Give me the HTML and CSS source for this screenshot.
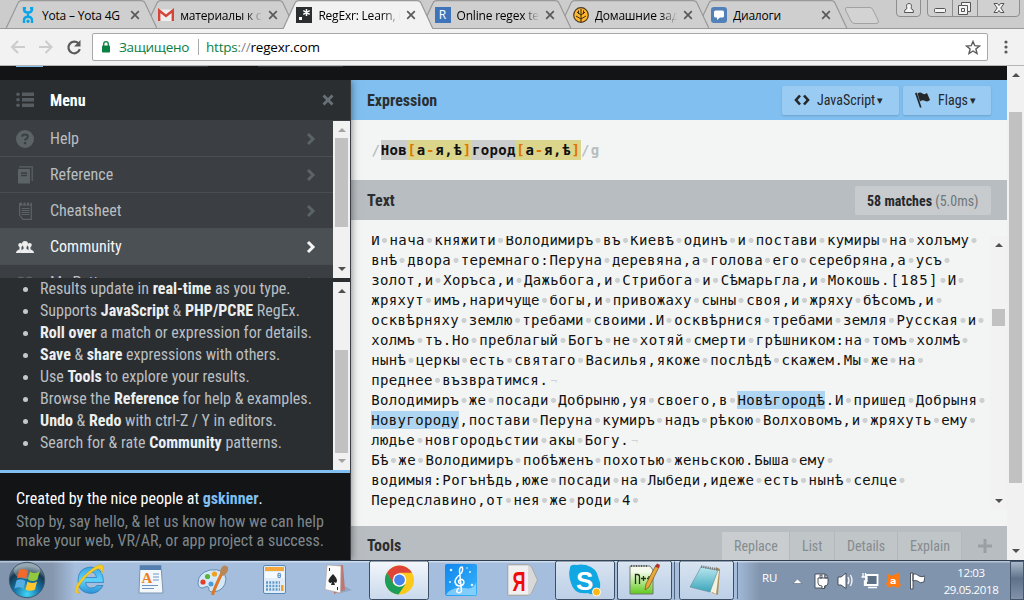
FILE: index.html
```html
<!DOCTYPE html>
<html lang="ru">
<head>
<meta charset="utf-8">
<title>RegExr: Learn, Build, &amp; Test RegEx</title>
<link rel="stylesheet" href="styles.css">
</head>
<body>
<svg width="0" height="0" class="defs">
  <defs>
    <symbol id="x" viewBox="0 0 10 10"><path d="M1.2 1.2l7.6 7.6M8.8 1.2L1.2 8.8" stroke="#5a5a5a" stroke-width="1.7"/></symbol>
    <symbol id="chev" viewBox="0 0 10 14"><path d="M2 2l5 5-5 5" fill="none" stroke="currentColor" stroke-width="3"/></symbol>
    <linearGradient id="red" x2="0" y2="1"><stop stop-color="#f3f7fb"/><stop offset="1" stop-color="#c9d9ec"/></linearGradient>
    <radialGradient id="orb" cx=".5" cy=".9" r=".8"><stop stop-color="#43d5f5"/><stop offset=".45" stop-color="#1475aa"/><stop offset=".8" stop-color="#16384f"/><stop offset="1" stop-color="#6d8593"/></radialGradient>
    <linearGradient id="ie" x2="0" y2="1"><stop stop-color="#3ca7e6"/><stop offset=".5" stop-color="#5ed2fb"/><stop offset="1" stop-color="#2d8fd5"/></linearGradient>
    <linearGradient id="note" x2="0" y2="1"><stop stop-color="#b9e6ee"/><stop offset="1" stop-color="#3ba6bb"/></linearGradient>
    <linearGradient id="npp" x2="0" y2="1"><stop offset=".2" stop-color="#f4fbea"/><stop offset="1" stop-color="#5fca1b"/></linearGradient>
    <linearGradient id="mus" x2="1" y2="1"><stop stop-color="#0f86ef"/><stop offset="1" stop-color="#39b4f9"/></linearGradient>
  </defs>
</svg>

<header class="tabs">
  <svg class="tab-shapes" width="1024" height="29">
    <g fill="#cfcfcf" stroke="#999" stroke-width="1.2">
      <path d="M697 28.5L709 3Q710 .6 713 .6H831Q834 .6 835 3L847 28.5"/>
      <path d="M559 28.5L571 3Q572 .6 575 .6H693Q696 .6 697 3L709 28.5"/>
      <path d="M421 28.5L433 3Q434 .6 437 .6H555Q558 .6 559 3L571 28.5"/>
      <path d="M145 28.5L157 3Q158 .6 161 .6H279Q282 .6 283 3L295 28.5"/>
      <path d="M6 28.5L18 3Q19 .6 22 .6H141Q144 .6 145 3L157 28.5"/>
    </g>
    <path d="M0 28.5H1024" stroke="#999"/>
    <path d="M283 29L295 3Q296 .6 299 .6H417Q420 .6 421 3L433 29" fill="#f2f2f2" stroke="#999" stroke-width="1.2"/>
    <path d="M847 7.5H870Q872 7.5 873 10L878.500 21Q879 23.500 876 23.500H855Q852 23.500 851 21L845.500 10Q844.500 7.500 847 7.500Z" fill="#d3d3d3" stroke="#a2a2a2"/>
    <g fill="#d0d0d0" stroke="#8e8e8e"><path d="M896.500-2V13Q896.500 16.500 900 16.500H917Q920.500 16.500 920.500 13V-2Z"/><path d="M927.500-2V13Q927.500 16.500 931 16.500H1016Q1019.500 16.500 1019.500 13V-2Z"/><path d="M952.500 0V16M977.500 0V16"/></g>
    <g fill="#f4f4f4" stroke="#555"><path d="M904.500 12.500Q904 9.500 907 8.500Q905.500 3.500 909 3.500Q912.500 3.500 911 8.500Q914 9.500 913.500 12.500Z"/><rect x="934.500" y="8.500" width="11" height="4" rx="1"/><path d="M961.500 2.500H970.500V11.500H967.500V14.500H958.500V5.500H961.500Z"/><path d="M961.500 5.500H967.500V11.500M961.500 8.500H964.500V11.500H961.500Z"/></g>
    <path d="M994 3.500H997.500L999 5.500L1000.500 3.500H1004L1000.800 8L1004 12.500H1000.500L999 10.500L997.500 12.500H994L997.200 8Z" fill="#f4f4f4" stroke="#555"/>
  </svg>
  <div class="tab-row">
    <div class="tab"><svg width="16" height="16" viewBox="0 0 16 16" fill="none" stroke="#0aa5e8" stroke-width="2.4"><path d="M4 0V2.500Q4 5.500 8 5.500Q12 5.500 12 2.500V0M8 5.500V9.500M4 16V13.500Q4 9.800 8 9.800Q12 9.800 12 13.500V16M3 1.200H6M10 1.200H13"/><circle cx="8" cy="14.300" r=".9" fill="#0aa5e8" stroke-width="1.600"/></svg><span>Yota – Yota 4G</span><svg class="close"><use href="#x"/></svg></div>
    <div class="tab"><svg width="16" height="16" viewBox="0 0 16 16"><path d="M1 2.500H15V14H1Z" fill="#eee"/><path d="M1.200 14V3.500L8 9L14.800 3.500V14" fill="none" stroke="#d54437" stroke-width="2.400"/></svg><span>материалы к с</span><svg class="close"><use href="#x"/></svg></div>
    <div class="tab on"><svg width="16" height="16" viewBox="0 0 16 16"><rect width="16" height="16" fill="#2b2e31"/><path d="M3 10H6V13H3Z" fill="#fff"/><path d="M10.500 2V9M7.300 3.700L13.700 7.300M13.700 3.700L7.300 7.300" stroke="#fff" stroke-width="1.500"/></svg><span>RegExr: Learn, B</span><svg class="close"><use href="#x"/></svg></div>
    <div class="tab"><b class="r">R</b><span>Online regex tes</span><svg class="close"><use href="#x"/></svg></div>
    <div class="tab"><svg width="16" height="16" viewBox="0 0 16 16"><circle cx="8" cy="8" r="7.300" fill="#ffb82e" stroke="#4b3820" stroke-width="1.200"/><path d="M8 2V15M8 12L3 9M8 12L13 9M8 8L4 5M8 8L12 5M5.500 7V3.500M10.500 7V3.500" stroke="#3b2a14" fill="none"/></svg><span>Домашние зад</span><svg class="close"><use href="#x"/></svg></div>
    <div class="tab"><svg width="16" height="16" viewBox="0 0 16 16"><rect width="16" height="16" rx="3" fill="#5181b8"/><path d="M4.500 3.500H11.500Q13 3.500 13 5V9Q13 10.500 11.500 10.500H9L6 13V10.500H4.500Q3 10.500 3 9V5Q3 3.500 4.500 3.500Z" fill="#fff"/></svg><span>Диалоги</span><svg class="close"><use href="#x"/></svg></div>
  </div>
</header>

<nav class="toolbar">
  <svg class="nav" width="80" height="20" viewBox="0 0 80 20" fill="none" stroke-width="2"><path d="M16 10H3.500M9 4L3 10L9 16M30 10H42M36.500 4L42.500 10L36.500 16" stroke="#ccc"/><path d="M69.500 6.500A5.800 5.800 0 1 0 70.800 12.200" stroke="#5a5a5a" stroke-width="2.200"/><path d="M71.500 3V9.500H65Z" fill="#5a5a5a"/></svg>
  <div class="url">
    <svg width="8" height="12" viewBox="0 0 8 12"><rect y="4.500" width="8" height="7" rx=".8" fill="#0b8043"/><path d="M1.700 5V3A2.300 2.300 0 0 1 6.300 3V5" fill="none" stroke="#0b8043" stroke-width="1.300"/></svg>
    <span class="safe">Защищено</span><i></i><span class="addr"><em>https</em><u>://</u>regexr.com</span>
    <svg class="star" width="16" height="15" viewBox="0 0 16 15"><path d="M8 1.500L9.800 5.700L14.500 6L10.900 9L12 13.500L8 11L4 13.500L5.100 9L1.500 6L6.200 5.700Z" fill="none" stroke="#5a5a5a" stroke-width="1.400"/></svg>
  </div>
  <svg class="dots" width="4" height="14" viewBox="0 0 4 14" fill="#5a5a5a"><circle cx="2" cy="2" r="1.600"/><circle cx="2" cy="7" r="1.600"/><circle cx="2" cy="12" r="1.600"/></svg>
</nav>

<div class="page">
  <div class="app">
    <div class="brand"><i class="b1"></i><i class="b2"></i><i class="b3"></i></div>
    <div class="columns">
      <aside>
        <div class="menu-head"><svg width="18" height="16" viewBox="0 0 18 16" fill="#565d62"><path d="M6 .5H18V4H6ZM6 6H18V9.500H6ZM6 11.500H18V15H6Z"/><circle cx="2" cy="2.200" r="1.800"/><circle cx="2" cy="7.700" r="1.800"/><circle cx="2" cy="13.200" r="1.800"/></svg><b class="rc">Menu</b><svg class="mx" width="12" height="12" viewBox="0 0 12 12"><path d="M1.500 1.500L10.500 10.500M10.500 1.500L1.500 10.500" stroke="#697176" stroke-width="2.800"/></svg></div>
        <div class="menu">
          <div class="items">
            <div class="item"><svg width="18" height="18" viewBox="0 0 18 18"><circle cx="9" cy="9" r="9" fill="#5b6367"/><path d="M6.200 6.700Q6.300 4.500 9 4.500Q11.800 4.500 11.800 6.700Q11.800 8 10.200 8.800Q9 9.400 9 10.600" fill="none" stroke="#3b3e42" stroke-width="2"/><rect x="7.900" y="12" width="2.200" height="2.200" fill="#3b3e42"/></svg><span class="rc">Help</span><svg class="chev"><use href="#chev"/></svg></div>
            <div class="item"><svg width="18" height="18" viewBox="0 0 18 18"><path d="M2 3H14V17.500H2Z" fill="#5b6367"/><path d="M3 .8H16.200V15" fill="none" stroke="#5b6367" stroke-width="1.200"/><path d="M5 7H11M5 9.500H11" stroke="#3b3e42" stroke-width="1.300"/></svg><span class="rc">Reference</span><svg class="chev"><use href="#chev"/></svg></div>
            <div class="item"><svg width="18" height="18" viewBox="0 0 18 18"><path d="M3.600 1V13L7 17.300H15.300V1" fill="none" stroke="#5b6367" stroke-width="1.200"/><path d="M3 3H16M5.500 6.500H13.500M5.500 8.500H13.500M5.500 10.500H13.500M5.500 12.500H13.500" stroke="#5b6367" stroke-width="1.100"/><path d="M4 2H15" stroke="#5b6367" stroke-width="3" stroke-dasharray="2 1.500"/></svg><span class="rc">Cheatsheet</span><svg class="chev"><use href="#chev"/></svg></div>
            <div class="item on"><svg width="18" height="18" viewBox="0 0 18 18" fill="#eee"><circle cx="9" cy="6" r="3"/><path d="M4 15Q4 12 7.500 11V8H10.500V11Q14 12 14 15Z"/><circle cx="4.300" cy="7" r="2.100"/><circle cx="13.700" cy="7" r="2.100"/><path d="M0 15Q0 12.500 3.500 11.500V8H5.500V12L4 15ZM18 15Q18 12.500 14.500 11.500V8H12.500V12L14 15Z"/></svg><span class="rc">Community</span><svg class="chev"><use href="#chev"/></svg></div>
            <div class="item"><svg width="18" height="18" viewBox="0 0 18 18"><path d="M9 16L1 8Q0 3 4.500 2.500Q8 2.500 9 5Q10 2.500 13.500 2.500Q18 3 17 8Z" fill="#5b6367"/></svg><span class="rc">My Patterns</span><svg class="chev"><use href="#chev"/></svg></div>
          </div>
          <div class="bar menu-bar"><s class="up dim"></s><p></p><s class="down"></s></div>
        </div>
        <div class="info">
          <ul>
            <li><span class="rc">Results update in <b>real-time</b> as you type.</span></li>
            <li><span class="rc">Supports <b>JavaScript</b> &amp; <b>PHP/PCRE</b> RegEx.</span></li>
            <li><span class="rc"><b>Roll over</b> a match or expression for details.</span></li>
            <li><span class="rc"><b>Save</b> &amp; <b>share</b> expressions with others.</span></li>
            <li><span class="rc">Use <b>Tools</b> to explore your results.</span></li>
            <li><span class="rc">Browse the <b>Reference</b> for help &amp; examples.</span></li>
            <li><span class="rc"><b>Undo</b> &amp; <b>Redo</b> with ctrl-Z / Y in editors.</span></li>
            <li><span class="rc">Search for &amp; rate <b>Community</b> patterns.</span></li>
          </ul>
          <div class="bar info-bar"><s class="up"></s><p></p><s class="down dim"></s></div>
        </div>
        <footer>
          <div class="made"><span class="rc">Created by the nice people at <b>gskinner</b>.</span></div>
          <div><span class="rc">Stop by, say hello, &amp; let us know how we can help</span></div>
          <div><span class="rc">make your web, VR/AR, or app project a success.</span></div>
        </footer>
      </aside>
      <main>
        <div class="head blue"><b class="rc">Expression</b>
          <div class="btn js"><svg width="16" height="12" viewBox="0 0 16 12" fill="none" stroke="#25282b" stroke-width="2.600"><path d="M6 1.500L2 6L6 10.500M10 1.500L14 6L10 10.500"/></svg><span class="rc">JavaScript</span><small>▾</small></div>
          <div class="btn fl"><svg width="16" height="16" viewBox="0 0 16 16" fill="#25282b"><path d="M0 1.200L1.700.5L6.500 15.200L5 15.700ZM2.500 1.500Q5-.5 7.500 1.500Q9.500 3 12 1L15 8Q12.500 10.500 9.800 8.800Q7.500 7.500 5 9.500Z"/></svg><span class="rc">Flags</span><small>▾</small></div>
        </div>
        <div class="expr mono"><span class="sl">/</span><span class="lit">Нов</span><span class="set">[а-я,ѣ]</span><span class="lit">город</span><span class="set">[а-я,ѣ]</span><span class="sl">/g</span></div>
        <div class="head grey"><b class="rc">Text</b><div class="result"><span class="rc"><b>58 matches</b> (5.0ms)</span></div></div>
        <div class="editor">
          <div class="text mono">
            <div>И нача княжити Володимиръ въ Киевѣ одинъ и постави кумиры на холъму </div>
            <div>внѣ двора теремнаго:Перуна деревяна,а голова его серебряна,а усъ </div>
            <div>золот,и Хоръса,и Дажьбога,и Стрибога и Сѣмарьгла,и Мокошь.[185] И </div>
            <div>жряхут имъ,наричуще богы,и привожаху сыны своя,и жряху бѣсомъ,и </div>
            <div>осквѣрняху землю требами своими.И осквѣрнися требами земля Русская и </div>
            <div>холмъ тъ.Но преблагый Богъ не хотяй смерти грѣшником:на томъ холмѣ </div>
            <div>нынѣ церкы есть святаго Василья,якоже послѣдѣ скажем.Мы же на </div>
            <div>преднее възвратимся.<q>¬</q></div>
            <div>Володимиръ же посади Добрыню,уя своего,в <mark>Новѣгородѣ</mark>.И пришед Добрыня </div>
            <div><mark>Новугороду</mark>,постави Перуна кумиръ надъ рѣкою Волховомъ,и жряхуть ему </div>
            <div>людье новгородьстии акы Богу.<q>¬</q></div>
            <div>Бѣ же Володимиръ побѣженъ похотью женьскою.Быша ему </div>
            <div>водимыя:Рогънѣдь,юже посади на Лыбеди,идеже есть нынѣ селце </div>
            <div>Передславино,от нея же роди 4 </div>
          </div>
          <div class="bar text-bar"><s class="up"></s><p></p><s class="down"></s></div>
        </div>
        <div class="head grey tools"><b class="rc">Tools</b>
          <div class="tl" style="width:68px"><span class="rc">Replace</span></div><div class="tl" style="width:45px"><span class="rc">List</span></div><div class="tl" style="width:63px"><span class="rc">Details</span></div><div class="tl" style="width:64px"><span class="rc">Explain</span></div>
          <svg width="14" height="14" viewBox="0 0 14 14"><path d="M7 0V14M0 7H14" stroke="#9a9fa2" stroke-width="3"/></svg>
        </div>
      </main>
    </div>
  </div>
  <div class="bar page-bar"><s class="up"></s><p></p><s class="down"></s></div>
</div>

<footer class="taskbar">
  <svg class="apps" width="740" height="40" viewBox="0 560 740 40">
    <g fill="url(#red)" stroke="#3d4d63"><rect x="369.500" y="561" width="59" height="38.500" rx="2"/><path d="M617.500 561.500V599.500M674.500 561.500V599.500" stroke-width=".8"/><rect x="555.500" y="561" width="59" height="38.500" rx="2" fill-opacity=".65"/><rect x="617.500" y="561" width="54" height="38.500" rx="2" fill-opacity=".65"/><rect x="679.500" y="561" width="54" height="38.500" rx="2" fill-opacity=".65"/><path d="M737.500 562V599" stroke-width=".8"/></g>
    <circle cx="27" cy="580" r="17.700" fill="url(#orb)" stroke="#415b71"/><ellipse cx="27" cy="571" rx="13" ry="8" fill="#fff" opacity=".28"/>
    <path d="M19 570Q24 567.500 28 571L26 579Q22 576.500 17 578.500Z" fill="#f06a2c"/><path d="M30 571.500Q34 574.500 39.500 571.500L37.500 579.500Q33 582.500 28 579.500Z" fill="#92c83e"/><path d="M16.500 580.500Q21 578 25.500 581L23.500 589Q20 586 14.500 588.500Z" fill="#56aee2"/><path d="M27.500 581.500Q32 584.500 37 581.500L35 589.500Q30 592 25.500 589.500Z" fill="#fdc62e"/>
    <path d="M103 585.500Q99 593.500 90.500 593.500Q78 592.500 78 580.500Q78 568 90.500 567Q103.500 567 103.500 582.500H85.500Q86.500 588 91.500 588Q95 588 97 585.500ZM85.500 577.500H96.500Q95.500 572 91 572Q87 572 85.500 577.500Z" fill="url(#ie)" stroke="#2678b8" stroke-width=".7"/><path d="M77 593.500Q71 590 83 577Q97 563 102 565Q105 567 101.500 574Q102.500 567.500 97 569Q88 573 81 583Q75 592 80 592.500Z" fill="#f8cd28" stroke="#dba510" stroke-width=".5"/>
    <path d="M140 565.500H161L163 593H139Z" fill="#f5f8fb" stroke="#7d96b0"/><path d="M140 565.500H161V570H140Z" fill="#527fb0"/><text x="141.500" y="583" font-family="Liberation Serif" font-weight="bold" font-size="15" fill="#ed7d1e">A</text><path d="M153 574H159M153 577H159M153 580H159M142 585.500H158M142 588.500H154" stroke="#6c94c7"/>
    <path d="M198 583Q198 573 210 570Q225 568 226 579Q225 591 213 592Q208 592 209 588Q208 585 203 588Q198 588 198 583Z" fill="#d5e8f7" stroke="#638db4"/><circle cx="203" cy="582" r="2.600" fill="#e23e2b"/><circle cx="207.500" cy="576.500" r="2.600" fill="#58b53b"/><circle cx="214.500" cy="574" r="2.600" fill="#f0a11f"/><circle cx="211" cy="584" r="2.500" fill="#4a9bdc"/><path d="M212.500 595Q214 589 222 573" stroke="#dc7928" stroke-width="3" fill="none"/><path d="M220 574Q220 569 222 567Q224 564 228 567Q229 573 223 576Z" fill="#b98658"/>
    <rect x="263.500" y="565.500" width="22" height="28" rx="1.500" fill="#e1edf8" stroke="#5589bb"/><path d="M265 567H284V571H265Z" fill="#f3a73d"/><path d="M265 572H284V578H265Z" fill="#f5fafe"/><text x="277" y="577.500" font-size="7" font-family="DejaVu Sans Mono" fill="#33527e">0</text><path d="M266 582.500H280M266 586H280M266 589.500H280" stroke="#5f9ac9" stroke-width="2.300" stroke-dasharray="2 1.200"/><path d="M281 585H283.500V591H281Z" fill="#efa331"/>
    <path d="M342 585L352 590L338 594Z" fill="#8197b3" opacity=".6"/><path d="M332 566L343 565L345 590L334 594Z" fill="#bd7671"/><path d="M327 565L341 566L340.500 593L325 589.500Z" fill="#fbfbfb" stroke="#b4a5a4" stroke-width=".7"/><path d="M333 574Q328 579 328.500 581.500Q330 584 332 582L331 585H335L334 582Q337 584 337 580.500Q337 578 333 574Z" fill="#252525"/><path d="M329.500 568V571M337.500 587V590" stroke="#222"/>
    <circle cx="399.500" cy="580" r="14.500" fill="#fbc91c"/><path d="M387 572.700A14.500 14.500 0 0 1 412 572.700H399.500L393 583.500Z" fill="#de4437"/><path d="M387 572.500A14.500 14.500 0 0 0 398.500 594.500L405.500 584Q397 589 393 583Z" fill="#1c9e58"/><circle cx="399.500" cy="580" r="6.800" fill="#fff"/><circle cx="399.500" cy="580" r="5.400" fill="#4684ee"/>
    <rect x="445" y="564" width="32" height="32" rx="2" fill="url(#mus)"/><path d="M448 592Q456 586 465 588T476 582V595H446Z" fill="#b8e4ff" opacity=".6"/><path d="M459 588Q456 590 457 592Q460 594 461.500 591L459.500 571Q459.500 567 462 567Q463.500 569 461.500 573Q455 578 455 582Q456 586.500 461 586Q465 584 463.500 580.500Q460.500 578 458.500 581Q458.500 583 460 584" fill="none" stroke="#fff" stroke-width="1.500"/><g fill="#d9f2ff"><circle cx="451" cy="570" r="1.300"/><circle cx="470" cy="572" r="1"/><circle cx="472" cy="585" r="1.300"/><circle cx="450" cy="582" r="1"/><circle cx="467" cy="568" r=".8"/></g>
    <path d="M509 564.500H527Q530 564.500 531.500 567L537.500 580L531.500 593Q530 595.500 527 595.500H509Q507.500 595.500 507.500 594V566Q507.500 564.500 509 564.500Z" fill="#d9d9d9" stroke="#aaa"/><rect x="509" y="566" width="19" height="28" fill="#f0f0f0"/><text x="512.500" y="590.500" font-size="28" font-family="Liberation Sans" font-weight="bold" fill="#f00b0b" textLength="13" lengthAdjust="spacingAndGlyphs">Я</text>
    <path d="M570 568Q570 564 577 565Q580 564 586 565Q597 568 598.500 578Q603 588 596 594Q590 595 588 593Q574 595 571 583Q568 575 570 568Z" fill="#10a7e2"/><text x="576" y="589.500" font-size="26" font-weight="bold" font-family="Liberation Sans" fill="#fff">S</text><circle cx="596.500" cy="592" r="4" fill="#fdb714" stroke="#fff"/>
    <path d="M630 566H650L653 570V594H630Z" fill="url(#npp)" stroke="#777"/><path d="M631 566H648" stroke="#555" stroke-width="2" stroke-dasharray="1 1.500"/><path d="M635.500 584V574.500H637.500Q639.500 574.500 639.500 577V584M641 578.500H646M643.500 576V581M647 578.500H651M649 576V581" stroke="#263015" fill="none" stroke-width="1.300"/><path d="M645 590L646 584L656 565L659 567L649 587Z" fill="#e7a939" stroke="#7a4c18" stroke-width=".7"/><path d="M655 567L659 568L660 565L657 563.500Z" fill="#b03127"/>
    <path d="M716 567L720 569L718 595L712 593Z" fill="#a99460"/><path d="M714 570L719 571L716 594L710 591Z" fill="#f4f1df"/><path d="M701 567L718 570L710 592L690 587Z" fill="url(#note)" stroke="#5f8a96" stroke-width=".6"/><path d="M701 566.500L718 569.500" stroke="#777" stroke-width="2.500" stroke-dasharray="1.200 1"/>
  </svg>
  <span class="lang">RU</span>
  <svg class="tray" width="135" height="40" viewBox="790 560 135 40">
    <path d="M793 583.500L797.500 579L802 583.500Z" fill="#fff" stroke="#4b5b70" stroke-width=".5"/>
    <g stroke="#3d4651" fill="#fff" stroke-width=".9"><path d="M815 574H825V588H815Z"/><path d="M818 578H828V583Q828 586 824.500 586V588.500H822V586Q818 586 818 583ZM820 575H822V578H820ZM825 575H827V578H825Z"/><path d="M838 577H841L846 573V588.500L841 585H838Z"/><path d="M866 575H877.500V585H866Z" fill="#5b7085" stroke="#fff" stroke-width="1.800"/><path d="M868 587.500H877M863 573V577M865.500 573V577M861.500 577H867V581H864.500V586" fill="none" stroke="#fff" stroke-width="1.300"/><path d="M910.500 573H913V589H910.500ZM913 574Q916 573 919 576Q922 577.500 925 576L924 582Q920 584 917.500 581Q915.500 580 913 581Z"/></g>
    <path d="M848 577Q850 580.500 848 584M850.500 575Q853.500 580.500 850.500 586" stroke="#f4f4f4" fill="none" stroke-width="1.300"/>
    <path d="M888 574L892 576Q897 572 900 574V578L898.500 581L901 585L898 588L893 586L889 588L886 584L888 580Z" fill="#ff7b11"/><text x="890" y="584" font-size="9.500" font-weight="bold" font-family="DejaVu Sans" fill="#fff">a</text>
  </svg>
  <div class="clock"><span>12:03</span><span>29.05.2018</span></div>
  <div class="peek"></div>
</footer>
<script src="editor.js"></script>
</body>
</html>
```
FILE: styles.css
```css
* { box-sizing: border-box; }
body { margin: 0; width: 1024px; height: 600px; overflow: hidden; font: 12px "Open Sans", "Noto Sans", sans-serif; color: #000; }
.defs { position: absolute; }
svg { display: block; flex: none; }

/* narrow face for the whole site UI */
.rc { font-family: "Roboto Condensed", Roboto, sans-serif; white-space: nowrap; }

.tabs { height: 29px; background: #ccc; position: relative; }
.tab-shapes { position: absolute; left: 0; top: 0; }
.tab-row { position: relative; display: flex; padding-left: 20px; height: 29px; }
.tab { width: 138.200px; display: flex; align-items: center; padding-top: 1px; }
.tab span { margin-left: 6px; width: 84px; overflow: hidden; white-space: nowrap; letter-spacing: -.2px; -webkit-mask-image: linear-gradient(90deg, #000 78%, transparent 98%); }
.tab:first-child span, .tab:last-child span { -webkit-mask-image: none; }
.close { width: 10px; height: 10px; margin-left: 4px; }
.r { width: 16px; height: 16px; background: #3f74bb; color: #fff; font-weight: 400; text-align: center; line-height: 16px; }

.toolbar { height: 37px; background: #f2f2f2; border-bottom: 1px solid #b5b5b5; display: flex; align-items: flex-start; }
.nav { margin: 8px 3px 0 9px; }
.url { margin-top: 4px; width: 896px; height: 28px; background: #fff; border: 1px solid #a8a8a8; border-radius: 2px; display: flex; align-items: center; font-size: 13.500px; padding: 0 6px 0 9px; }
.safe { color: #0b8043; margin-left: 9px; width: 70px; letter-spacing: -.3px; }
.url i { width: 1px; height: 16px; background: #aaa; margin: 0 7px 0 9px; }
.addr { flex: 1; letter-spacing: -.2px; }
.addr em { font-style: normal; color: #0b8043; }
.addr u { text-decoration: none; color: #888; }
.dots { margin: 11px 0 0 16px; }

.page { display: flex; height: 494px; }
.app { width: 1007px; }
.brand { height: 14px; background: #121416; display: flex; }
.brand i { height: 1px; }
.b1 { background: #80bff0; width: 27px; margin-left: 16px; }
.b2 { background: #34383b; width: 48px; margin-left: 117px; }
.b3 { background: #34383b; width: 85px; margin-left: 50px; }
.columns { display: flex; height: 480px; overflow: hidden; }

aside { width: 351px; background: #2b2e31; border-right: 1px solid #3b3e42; color: #b9bfc3; font-size: 16px; box-shadow: 0 0 8px rgba(0,0,0,.5); position: relative; z-index: 1; }
.menu-head { height: 41px; border-bottom: 1px solid #3b3e42; display: flex; align-items: center; padding-left: 16px; color: #fff; }
.menu-head .rc { margin-left: 16px; }
.mx { margin: 0 16px 0 auto; }
.menu { height: 157px; display: flex; overflow: hidden; }
.items { flex: 1; overflow: hidden; }
.item { height: 36px; background: #3b3e42; border-bottom: 1px solid #4a4e52; display: flex; align-items: center; padding: 0 17px 0 16px; color: #b9bfc3; }
.item .rc { margin-left: 16px; }
.item .chev { width: 10px; height: 14px; margin-left: auto; color: #5b6367; }
.item.on { background: #4a5054; color: #f5f5f5; }
.item.on .chev { color: #f5f5f5; }

.bar { width: 17px; background: #f1f1f1; display: flex; flex-direction: column; align-items: center; flex: none; }
.bar s { width: 0; height: 0; border: 4px solid transparent; }
.bar .up { border-top: 0; border-bottom-color: #505050; margin-top: 7px; }
.bar .down { border-bottom: 0; border-top-color: #505050; margin: auto 0 7px; }
.bar .up.dim { border-bottom-color: #a3a3a3; }
.bar .down.dim { border-top-color: #a3a3a3; }
.bar p { width: 13px; margin: 0; background: #c1c1c1; }
.menu-bar p { height: 89px; margin-top: 6px; }
.info { border-top: 4px solid #2b2e31; height: 192px; display: flex; overflow: hidden; }
.info-bar p { height: 103px; margin-top: 57px; }
.info-bar .down { margin-bottom: 7px; }
ul { margin: -4px 0 0; padding: 0; list-style: none; flex: 1; }
li { height: 22px; line-height: 22px; padding-left: 23px; display: flex; align-items: center; }
li::before { content: ""; width: 5px; height: 5px; border-radius: 50%; background: #c3c8cb; flex: none; margin-right: 12px; }
li b { color: #eceeef; }
aside footer { border-top: 3px solid #80bff0; background: #121416; height: 100px; padding: 15px 16px; color: #7f878c; line-height: 19px; }
.made { color: #fff; line-height: 21px; margin-bottom: 3px; }
.made b { color: #80bff0; }

main { width: 656px; background: #f3f5f4; color: #25282b; }
.head { height: 40px; display: flex; align-items: center; padding: 0 16px; font-size: 16px; }
.head > b { flex: 1; color: #2b2e31; width: 0; }
.blue { background: #80bff0; }
.grey { background: #b8bdc1; }
.btn { height: 29px; margin-left: 4px; border-radius: 2px; background: #9acbf2; box-shadow: 0 1px 2px rgba(0,0,0,.15); display: flex; align-items: center; padding-left: 12px; font-size: 14px; }
.btn .rc { margin-left: 7px; }
.btn small { font: 11px "DejaVu Sans"; }
.js { width: 117px; }
.js .rc { width: 60px; }
.fl { width: 88px; }
.fl .rc { width: 32px; }
.result { width: 136px; height: 29px; background: #c7cbce; border-radius: 2px; font-size: 14px; line-height: 29px; padding-left: 12px; color: #70767a; }
.result b { color: #25282b; }

.mono { font: 14px/20px "DejaVu Sans Mono", "Liberation Mono", monospace; }
.mono b, .mono strong { font-weight: inherit; display: inline-block; height: 20px; text-align: center; vertical-align: top; }
.mono b { width: 8.800px; }
.mono strong { width: 9.600px; }
.mono .sp { background: radial-gradient(circle at 50% 52%, #cdd0d0 2.200px, transparent 2.900px); }
.expr { height: 60px; padding: 20px 20px; display: flex; font-weight: bold; color: #111; }
.lit { background: #cbcccc; }
.set { background: #dbd68c; }
.set .br { color: #e07400; }
.sl { color: #b8bdc1; }
.editor { height: 306px; padding: 16px 0; display: flex; }
.text { flex: 1; height: 274px; overflow: hidden; padding-left: 20px; color: #111; }
.text div { height: 20px; white-space: nowrap; }
.text div:first-child { margin-top: -6px; }
mark { display: inline-block; height: 18px; margin-top: 1px; vertical-align: top; line-height: 18px; background: #aed5f2; color: inherit; }
q { quotes: none; color: #d0d3d3; font-size: 11px; margin-left: 2px; }
q::before, q::after { content: none; }
.text-bar { height: 274px; background: #f2f2f2; }
.text-bar p { height: 17px; margin-top: 62px; }
.tools { align-items: flex-start; padding-right: 15px; }
.tools > b { line-height: 40px; }
.tl { margin-top: 6px; height: 34px; background: #c0c5c8; border-right: 1px solid #b3b8bb; padding-left: 12px; font-size: 14px; line-height: 28px; color: #858b8f; overflow: hidden; }
.tl:nth-child(2) { background: #c9cdd0; }
.tools svg { margin: 13px 0 0 16px; }
.page-bar p { height: 371px; margin-top: 35px; }
.page-bar .down { margin-bottom: 7px; }

.taskbar { height: 40px; border-top: 1px solid #2f3f52; background: linear-gradient(180deg, rgba(255,255,255,.45) 0 1px, transparent 2px), linear-gradient(90deg, #8295ae 0, #8596ae 52px, #a5bedd 75px, #a5bedd 735px, #8194ad 760px); display: flex; }
.apps { margin-top: -1px; }
.tray { margin-top: -1px; }
.lang { width: 28px; margin-left: 22px; margin-right: 0; padding-top: 9px; color: #fff; font-size: 11.500px; }
.clock { margin-left: 11px; width: 70px; display: flex; flex-direction: column; align-items: center; padding-top: 3px; color: #fff; font-size: 11.500px; line-height: 17px; letter-spacing: -.4px; }
.peek { margin-left: auto; width: 14px; border: 1px solid #46566b; background: linear-gradient(#a9b8c9, #5f7189 45%, #8192a9); }
```
FILE: editor.js
```js
// Gives every editor character its own cell: Cyrillic cells are narrower
// than the punctuation and whitespace cells.
function cells(node) {
  [...node.childNodes].forEach(function (n) {
    if (n.nodeType === 1) {
      if (n.tagName !== 'Q') cells(n);
      return;
    }
    if (!n.data.trim() && n.parentNode.classList.contains('mono')) return;
    const frag = document.createDocumentFragment();
    for (const ch of n.data) {
      const cyr = /[\u0400-\u04ff]/.test(ch);
      const el = document.createElement(cyr ? 'b' : 'strong');
      el.textContent = ch;
      if (ch === ' ') el.className = 'sp';
      if (/[\[\]-]/.test(ch)) el.className = 'br';
      frag.appendChild(el);
    }
    n.replaceWith(frag);
  });
}
document.querySelectorAll('.mono').forEach(cells);
```
